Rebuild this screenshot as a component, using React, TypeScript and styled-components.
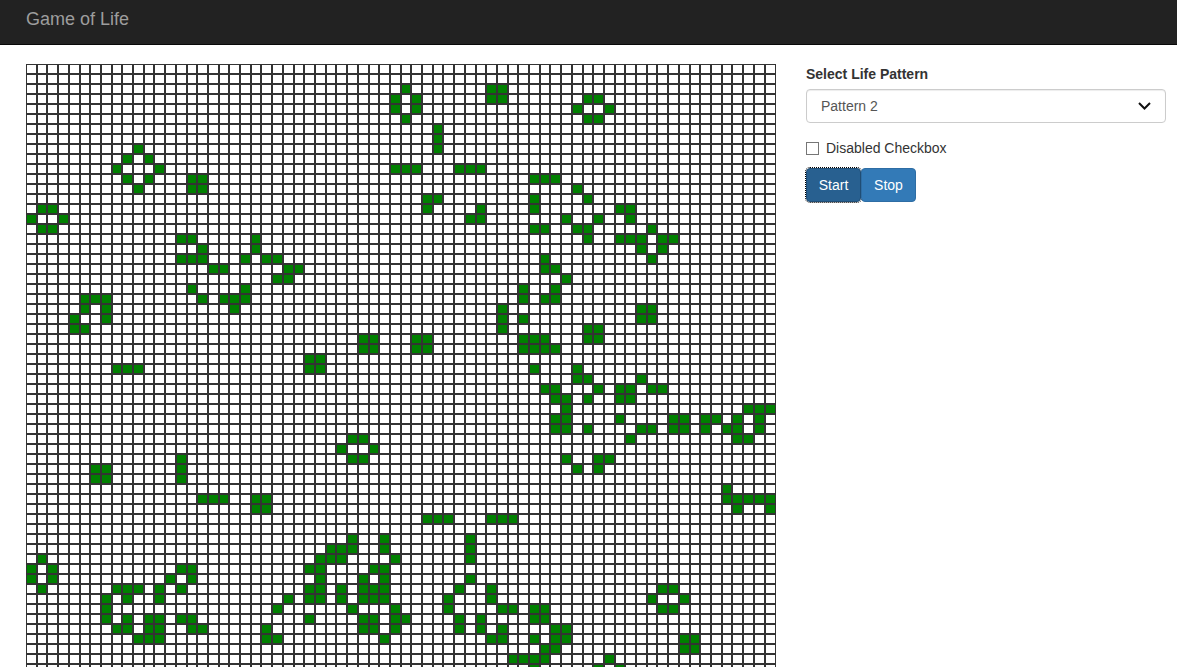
import React from "react";
import styled, { createGlobalStyle } from "styled-components";

const GlobalStyle = createGlobalStyle`
  html, body {
    margin: 0;
    height: 667px;
    overflow: hidden;
    background: #fff;
    font-family: "Liberation Sans", Arial, sans-serif;
    font-size: 14px;
    color: #333;
  }
`;

const COLS = 70;
const ROWS = 61;

// live cells of the board, row -> columns
const LIVE: Record<number, number[]> = {
  2: [35, 43, 44],
  3: [34, 36, 43, 44, 52, 53],
  4: [34, 36, 51, 54],
  5: [35, 52, 53],
  6: [38],
  7: [38],
  8: [10, 38],
  9: [9, 11],
  10: [8, 12, 34, 35, 36, 40, 41, 42],
  11: [9, 11, 15, 16, 47, 48, 49],
  12: [10, 15, 16, 51],
  13: [37, 38, 47, 52],
  14: [1, 2, 37, 42, 47, 55, 56],
  15: [0, 3, 41, 42, 50, 53, 56],
  16: [1, 2, 47, 48, 51, 52, 58],
  17: [14, 15, 21, 52, 55, 56, 57, 59, 60],
  18: [16, 21, 57, 59],
  19: [14, 15, 16, 20, 22, 23, 48, 58],
  20: [17, 18, 24, 25, 48, 49],
  21: [23, 24, 50],
  22: [15, 20, 46, 49],
  23: [5, 6, 7, 16, 18, 19, 20, 46, 48, 49],
  24: [5, 7, 19, 44, 57, 58],
  25: [4, 7, 44, 46, 57, 58],
  26: [4, 5, 44, 52, 53],
  27: [31, 32, 36, 37, 46, 47, 48, 52, 53],
  28: [31, 32, 36, 37, 46, 47, 48, 49],
  29: [26, 27],
  30: [8, 9, 10, 26, 27, 47, 51],
  31: [51, 52, 57],
  32: [48, 49, 53, 55, 56, 58, 59],
  33: [49, 50, 52, 55, 56],
  34: [50, 67, 68, 69],
  35: [49, 50, 55, 60, 61, 63, 64, 66, 68],
  36: [49, 50, 52, 57, 58, 60, 61, 63, 65, 66, 68],
  37: [30, 31, 56, 66, 67],
  38: [29, 32],
  39: [14, 30, 31, 50, 53, 54],
  40: [6, 7, 14, 51, 53],
  41: [6, 7, 14],
  42: [65],
  43: [16, 17, 18, 21, 22, 65, 66, 67, 68, 69],
  44: [21, 22, 66, 69],
  45: [37, 38, 39, 43, 44, 45],
  47: [30, 33, 41],
  48: [28, 29, 30, 33, 41],
  49: [1, 27, 28, 29, 34, 41],
  50: [0, 2, 14, 15, 26, 27, 32, 33],
  51: [0, 2, 13, 15, 27, 31, 33, 41],
  52: [1, 8, 9, 10, 12, 14, 26, 27, 29, 31, 32, 33, 40, 43, 59, 60],
  53: [7, 9, 12, 24, 26, 27, 29, 31, 32, 33, 39, 43, 58, 61],
  54: [7, 23, 30, 34, 39, 44, 45, 47, 48, 59, 60],
  55: [7, 9, 11, 12, 14, 15, 26, 31, 32, 34, 35, 40, 42, 47, 48],
  56: [8, 9, 11, 12, 15, 16, 22, 31, 32, 34, 40, 42, 44, 49, 50],
  57: [10, 11, 12, 22, 23, 33, 43, 44, 47, 49, 50, 61, 62],
  58: [48, 49, 61, 62],
  59: [45, 46, 47, 48, 54],
  60: [47, 53, 55],
};

const Navbar = styled.nav`
  height: 44px;
  padding-left: 26px;
  display: flex;
  align-items: center;
  background: #222;
  border-bottom: 1px solid #080808;
`;

const Brand = styled.a`
  margin-top: -6px;
  font-size: 18px;
  line-height: 20px;
  color: #9d9d9d;
  text-decoration: none;
`;

const Page = styled.main`
  display: flex;
  gap: 30px;
  padding: 19px 11px 0 26px;
`;

const Board = styled.table`
  flex: none;
  width: 750px;
  table-layout: fixed;
  border-collapse: separate;
  border-spacing: 0;
`;

const Cell = styled.td<{ $alive: boolean }>`
  height: 8px;
  padding: 0;
  border: 1px solid #333;
  background: ${(p) => (p.$alive ? "#008000" : "#fff")};
`;

const Panel = styled.aside`
  flex: 1;
  min-width: 0;
`;

const Label = styled.label`
  display: block;
  margin-bottom: 5px;
  font-weight: 700;
  line-height: 20px;
`;

const SelectWrap = styled.div`
  position: relative;
  margin-bottom: 15px;
`;

const Select = styled.select`
  display: block;
  width: 100%;
  height: 34px;
  padding: 0 14px;
  appearance: none;
  background: #fff;
  border: 1px solid #ccc;
  border-radius: 4px;
  box-shadow: inset 0 1px 1px rgba(0, 0, 0, 0.075);
  font-family: inherit;
  font-size: 14px;
  color: #555;
`;

const Chevron = styled.svg`
  position: absolute;
  top: 13px;
  right: 15px;
  width: 13px;
  height: 8px;
  pointer-events: none;
`;

const CheckRow = styled.label`
  display: flex;
  align-items: center;
  height: 20px;
  margin-bottom: 10px;
  line-height: 20px;
`;

const Check = styled.input`
  appearance: none;
  width: 13px;
  height: 13px;
  margin: 0 7px 0 0;
  background: #fff;
  border: 1px solid #767676;
`;

const Buttons = styled.div`
  display: flex;
`;

const Button = styled.button<{ $active?: boolean }>`
  width: 55px;
  height: 34px;
  padding: 0;
  border: 1px solid ${(p) => (p.$active ? "#204d74" : "#2e6da4")};
  border-radius: 4px;
  background: ${(p) => (p.$active ? "#286090" : "#337ab7")};
  outline: ${(p) => (p.$active ? "1px dotted #000" : "none")};
  font-family: inherit;
  font-size: 14px;
  color: #fff;
`;

const App = () => {
  const rows = Array.from({ length: ROWS }, (_, r) => r);
  const cols = Array.from({ length: COLS }, (_, c) => c);
  return (
    <React.Fragment>
      <GlobalStyle />
      <Navbar>
        <Brand href="#">Game of Life</Brand>
      </Navbar>
      <Page>
        <Board>
          <tbody>
            {rows.map((r) => (
              <tr key={r}>
                {cols.map((c) => (
                  <Cell key={c} $alive={(LIVE[r] || []).includes(c)} />
                ))}
              </tr>
            ))}
          </tbody>
        </Board>
        <Panel>
          <Label htmlFor="pattern">Select Life Pattern</Label>
          <SelectWrap>
            <Select id="pattern" defaultValue="Pattern 2">
              <option>Pattern 1</option>
              <option>Pattern 2</option>
              <option>Pattern 3</option>
            </Select>
            <Chevron viewBox="0 0 13 8" fill="none">
              <path d="M1 1l5.5 5.5L12 1" stroke="#111" strokeWidth="2" />
            </Chevron>
          </SelectWrap>
          <CheckRow>
            <Check type="checkbox" />
            Disabled Checkbox
          </CheckRow>
          <Buttons>
            <Button $active>Start</Button>
            <Button>Stop</Button>
          </Buttons>
        </Panel>
      </Page>
    </React.Fragment>
  );
};

export default App;
